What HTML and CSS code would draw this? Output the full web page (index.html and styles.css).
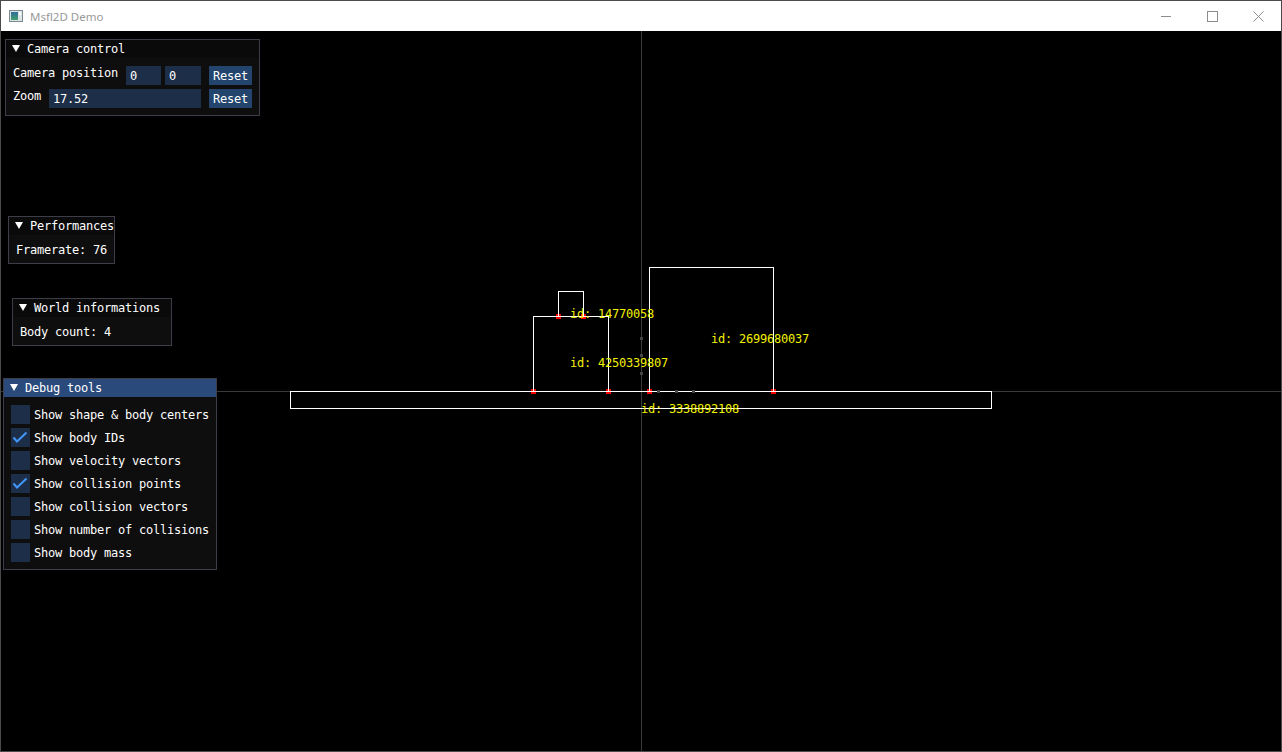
FILE: index.html
```html
<!DOCTYPE html>
<html lang="en">
<head>
<meta charset="utf-8">
<title>Msfl2D Demo</title>
<link rel="stylesheet" href="styles.css">
</head>
<body>
<div class="window">
  <header class="titlebar">
    <svg class="app-icon" width="14" height="12" viewBox="0 0 14 12">
      <defs>
        <linearGradient id="ig" x1="0" y1="0" x2="0" y2="1">
          <stop offset="0" stop-color="#2e6d9c"/>
          <stop offset="1" stop-color="#43a06c"/>
        </linearGradient>
      </defs>
      <rect x="0.5" y="0.5" width="13" height="11" fill="#dde4e8" stroke="#7d8a90"/>
      <rect x="2" y="2" width="7" height="8" fill="url(#ig)"/>
      <rect x="10" y="2" width="2" height="3" fill="#ffffff"/>
    </svg>
    <span class="app-title">Msfl2D Demo</span>
    <div class="caption-buttons">
      <div class="cap-btn"><svg width="10" height="10" viewBox="0 0 10 10"><line x1="0" y1="5.5" x2="10" y2="5.5"/></svg></div>
      <div class="cap-btn"><svg width="11" height="11" viewBox="0 0 11 11"><rect x="0.5" y="0.5" width="10" height="10"/></svg></div>
      <div class="cap-btn"><svg width="11" height="11" viewBox="0 0 11 11"><line x1="0.5" y1="0.5" x2="10.5" y2="10.5"/><line x1="10.5" y1="0.5" x2="0.5" y2="10.5"/></svg></div>
    </div>
  </header>

  <main class="viewport">
    <svg class="scene" width="1280" height="720" viewBox="1 31 1280 720" shape-rendering="crispEdges">
      <line x1="641.5" y1="31" x2="641.5" y2="751" stroke="#3a3a3a"/>
      <line x1="0" y1="391.5" x2="1282" y2="391.5" stroke="#3a3a3a"/>

      <g fill="#ff0000">
        <rect x="556" y="314" width="5" height="5"/>
        <rect x="581" y="314" width="5" height="5"/>
        <rect x="531" y="389" width="5" height="5"/>
        <rect x="606" y="389" width="5" height="5"/>
        <rect x="647" y="389" width="5" height="5"/>
        <rect x="771" y="389" width="5" height="5"/>
      </g>

      <g fill="none" stroke="#ffffff" stroke-width="1">
        <rect x="558.5" y="291.5" width="25" height="25"/>
        <rect x="533.5" y="316.5" width="75" height="75"/>
        <rect x="649.5" y="267.5" width="124" height="124"/>
        <rect x="290.5" y="391.5" width="701" height="17"/>
      </g>

      <g fill="#444444">
        <rect x="640" y="337" width="3" height="3"/>
        <rect x="640" y="354" width="3" height="3"/>
        <rect x="640" y="372" width="3" height="3"/>
        <rect x="657" y="390" width="3" height="3"/>
        <rect x="675" y="390" width="3" height="3"/>
        <rect x="692" y="390" width="3" height="3"/>
      </g>

      <g class="ids" shape-rendering="auto">
        <text x="570" y="318">id: 14770058</text>
        <text x="570" y="367">id: 4250339807</text>
        <text x="711" y="343">id: 2699680037</text>
        <text x="641" y="413">id: 3338892108</text>
      </g>
    </svg>

    <section class="panel panel-camera">
      <div class="panel-title">
        <svg class="tri" width="8" height="7" viewBox="0 0 8 7"><polygon points="0,0 8,0 4,7"/></svg>
        <span>Camera control</span>
      </div>
      <div class="panel-body">
        <div class="row">
          <span class="label label-pos">Camera position</span>
          <span class="input input-xy gap8">0</span>
          <span class="input input-xy input-y gap4">0</span>
          <span class="btn gap8">Reset</span>
        </div>
        <div class="row">
          <span class="label label-zoom">Zoom</span>
          <span class="input input-zoom gap8">17.52</span>
          <span class="btn gap8">Reset</span>
        </div>
      </div>
    </section>

    <section class="panel panel-perf">
      <div class="panel-title">
        <svg class="tri" width="8" height="7" viewBox="0 0 8 7"><polygon points="0,0 8,0 4,7"/></svg>
        <span>Performances</span>
      </div>
      <div class="panel-body">
        <span class="label">Framerate: 76</span>
      </div>
    </section>

    <section class="panel panel-world">
      <div class="panel-title">
        <svg class="tri" width="8" height="7" viewBox="0 0 8 7"><polygon points="0,0 8,0 4,7"/></svg>
        <span>World informations</span>
      </div>
      <div class="panel-body">
        <span class="label">Body count: 4</span>
      </div>
    </section>

    <section class="panel panel-debug">
      <div class="panel-title active">
        <svg class="tri" width="8" height="7" viewBox="0 0 8 7"><polygon points="0,0 8,0 4,7"/></svg>
        <span>Debug tools</span>
      </div>
      <div class="panel-body">
        <div class="check-row"><span class="checkbox"></span><span class="check-label">Show shape &amp; body centers</span></div>
        <div class="check-row"><span class="checkbox"><svg width="19" height="19" viewBox="0 0 19 19"><polyline points="2.5,9.5 6,13.5 15.5,4.5"/></svg></span><span class="check-label">Show body IDs</span></div>
        <div class="check-row"><span class="checkbox"></span><span class="check-label">Show velocity vectors</span></div>
        <div class="check-row"><span class="checkbox"><svg width="19" height="19" viewBox="0 0 19 19"><polyline points="2.5,9.5 6,13.5 15.5,4.5"/></svg></span><span class="check-label">Show collision points</span></div>
        <div class="check-row"><span class="checkbox"></span><span class="check-label">Show collision vectors</span></div>
        <div class="check-row"><span class="checkbox"></span><span class="check-label">Show number of collisions</span></div>
        <div class="check-row"><span class="checkbox"></span><span class="check-label">Show body mass</span></div>
      </div>
    </section>
  </main>
</div>
</body>
</html>
```

FILE: styles.css
```css
* {
  box-sizing: border-box;
}

html,
body {
  margin: 0;
  padding: 0;
  background: #000;
}

body {
  width: 1282px;
  height: 752px;
  overflow: hidden;
}

.window {
  width: 1282px;
  height: 752px;
  border: 1px solid #4a4a4a;
  display: flex;
  flex-direction: column;
  background: #000;
}

/* ---------- Windows title bar ---------- */
.titlebar {
  height: 30px;
  flex: none;
  background: #ffffff;
  display: flex;
  align-items: center;
  padding-left: 8px;
  font-family: "Noto Sans", "Open Sans", sans-serif;
}

.app-icon {
  flex: none;
  margin-right: 7px;
}

.app-title {
  font-size: 11.5px;
  color: #999999;
}

.caption-buttons {
  margin-left: auto;
  display: flex;
  height: 100%;
}

.cap-btn {
  width: 46px;
  height: 100%;
  display: flex;
  align-items: center;
  justify-content: center;
}

.cap-btn svg {
  stroke: #8c8c8c;
  stroke-width: 1;
  fill: none;
}

/* ---------- Render viewport ---------- */
.viewport {
  position: relative;
  flex: 1;
  overflow: hidden;
  background: #000;
  font-family: "DejaVu Sans Mono", "Liberation Mono", monospace;
  font-size: 12px;
  letter-spacing: -0.22px;
  line-height: 13px;
  color: #ffffff;
}

.scene {
  position: absolute;
  left: 0;
  top: 0;
}

.ids text {
  font-family: "DejaVu Sans Mono", "Liberation Mono", monospace;
  font-size: 12px;
  letter-spacing: -0.22px;
  fill: #f2f200;
}

/* ---------- ImGui windows ---------- */
.panel {
  position: absolute;
  background: #0e0e0e;
  border: 1px solid #3e3e48;
  display: flex;
  flex-direction: column;
  overflow: hidden;
}

.panel-camera {
  left: 4px;
  top: 8px;
  width: 255px;
  height: 77px;
}

.panel-perf {
  left: 7px;
  top: 185px;
  width: 107px;
  height: 48px;
}

.panel-world {
  left: 11px;
  top: 267px;
  width: 160px;
  height: 48px;
}

.panel-debug {
  left: 2px;
  top: 347px;
  width: 214px;
  height: 192px;
}

.panel-title {
  height: 18px;
  flex: none;
  background: #0a0a0a;
  display: flex;
  align-items: flex-start;
  padding: 3px 0 0 6px;
  white-space: nowrap;
  overflow: hidden;
}

.panel-title.active {
  background: #294a7a;
}

.tri {
  flex: none;
  margin-top: 2px;
  margin-right: 7px;
  fill: #ffffff;
}

.panel-body {
  padding: 8px 7px 7px 7px;
  display: flex;
  flex-direction: column;
  gap: 4px;
  white-space: nowrap;
}

.row {
  display: flex;
  align-items: flex-start;
  height: 19px;
}

.label {
  line-height: 13px;
  padding-top: 1px;
}

.label-pos {
  width: 105px;
}

.label-zoom {
  width: 28px;
}

.input {
  background: #1d2e48;
  height: 19px;
  padding: 4px 4px 0;
}

.input-xy {
  width: 35px;
}

.input-y {
  width: 36px;
}

.input-zoom {
  width: 152px;
}

.btn {
  background: #23446c;
  height: 19px;
  width: 43px;
  padding-top: 4px;
  text-align: center;
}

.gap8 {
  margin-left: 8px;
}

.gap4 {
  margin-left: 4px;
}

.check-row {
  display: flex;
  gap: 4px;
  height: 19px;
}

.checkbox {
  width: 19px;
  height: 19px;
  flex: none;
  background: #1d2e48;
}

.checkbox svg {
  display: block;
  fill: none;
  stroke: #4296fa;
  stroke-width: 2;
}

.check-label {
  padding-top: 4px;
}
```
